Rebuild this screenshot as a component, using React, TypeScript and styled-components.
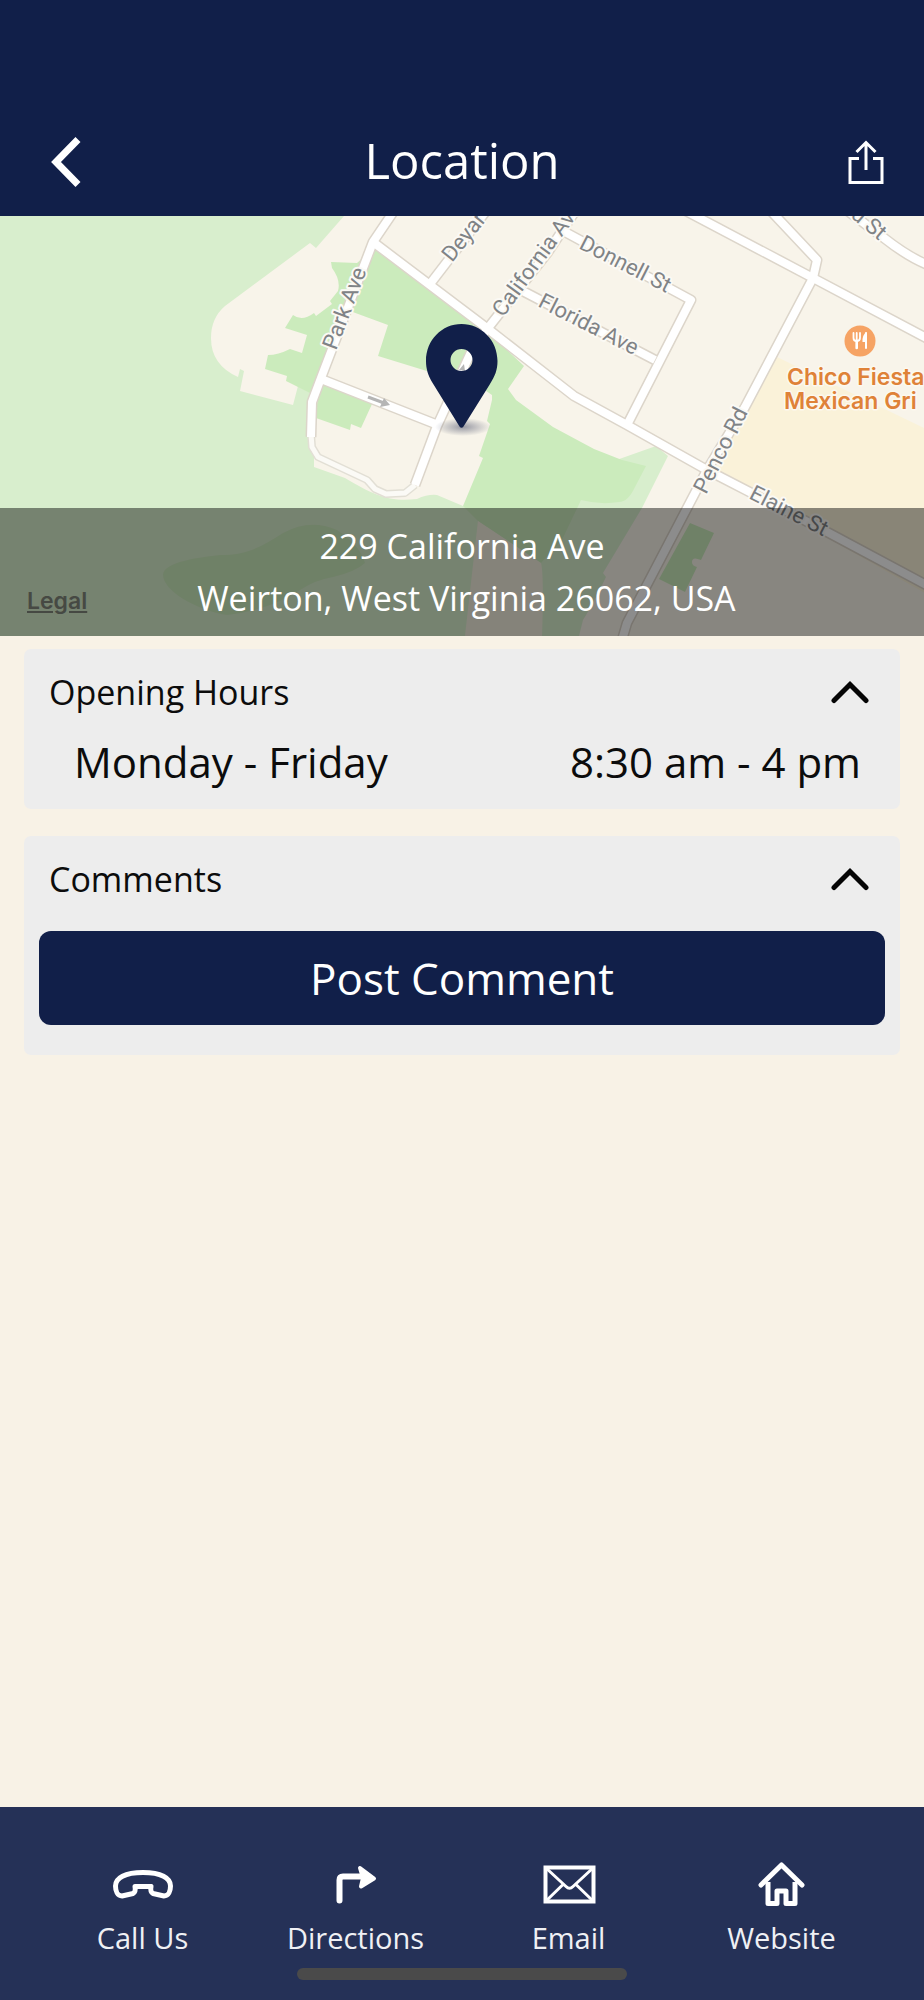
import React, { useState } from "react";
import styled, { createGlobalStyle } from "styled-components";

const GlobalStyle = createGlobalStyle`
  *, *::before, *::after { box-sizing: border-box; }
  body { margin: 0; background: #f8f2e6; }
  button { font: inherit; color: inherit; border: 0; padding: 0; background: none; cursor: pointer; }
`;

const navy = "#111f49";

const Screen = styled.div`
  min-height: 100vh;
  display: flex;
  flex-direction: column;
  background: #f8f2e6;
  color: #0c0c0c;
  font-family: "Open Sans", "Noto Sans", sans-serif;
`;

const Header = styled.header`
  display: grid;
  grid-template-columns: 1fr auto 1fr;
  align-items: center;
  padding: 124px 40px 16px;
  background: ${navy};
  color: #fff;
`;

const Title = styled.h1`
  margin: 2px 0 6px;
  font-size: 49px;
  line-height: 68px;
  font-weight: 400;
`;

const HeaderButton = styled.button<{ $side: "left" | "right" }>`
  justify-self: ${(p) => (p.$side === "left" ? "start" : "end")};
  display: flex;
  padding: 0 ${(p) => (p.$side === "left" ? "11px" : "0")};
`;

const MapSection = styled.section`
  position: relative;
  height: 420px;
  overflow: hidden;
`;

const MapDrawing = styled.svg`
  display: block;
  width: 100%;
  height: 100%;
`;

const StreetName = styled.text`
  font-family: Roboto, sans-serif;
  font-size: 22px;
  font-weight: 400;
  fill: #808386;
  stroke: #fbf9f4;
  stroke-width: 4px;
  stroke-linejoin: round;
  paint-order: stroke;
`;

const PlaceName = styled.text`
  font-family: Inter, sans-serif;
  font-size: 23px;
  font-weight: 600;
  fill: #df8238;
  stroke: #fcf8ee;
  stroke-width: 3px;
  stroke-linejoin: round;
  paint-order: stroke;
`;

const AddressBar = styled.address`
  position: absolute;
  left: 0;
  right: 0;
  bottom: 0;
  padding: 12px 24px;
  background: rgba(0, 0, 0, 0.45);
  color: #fff;
  font-size: 34px;
  line-height: 52px;
  font-style: normal;
  text-align: center;
`;

const AddressLine = styled.div``;

const LegalLink = styled.a`
  position: absolute;
  left: 27px;
  bottom: 21px;
  color: #464943;
  font-family: Inter, sans-serif;
  font-size: 23px;
  line-height: 28px;
  font-weight: 600;
  text-decoration: underline;
`;

const Main = styled.main`
  flex: 1;
  display: flex;
  flex-direction: column;
  gap: 27px;
  padding: 13px 24px;
`;

const Card = styled.section`
  padding: 20px 15px 18px;
  border-radius: 7px;
  background: #ededed;
`;

const CardTitle = styled.h2`
  margin: 0;
  font-size: 34px;
  line-height: 46px;
  font-weight: 400;
`;

const CardToggle = styled.button`
  display: flex;
  width: 100%;
  align-items: center;
  justify-content: space-between;
  padding: 0 16px 0 10px;
  text-align: left;
`;

const ToggleIcon = styled.svg<{ $open: boolean }>`
  transform: rotate(${(p) => (p.$open ? "0" : "180deg")});
`;

const HoursRow = styled.div`
  display: flex;
  justify-content: space-between;
  gap: 24px;
  padding: 18px 24px 0 35px;
  font-size: 42px;
  line-height: 58px;
`;

const PostButton = styled.button`
  display: block;
  width: 100%;
  height: 94px;
  margin: 29px 0 12px;
  border-radius: 12px;
  background: ${navy};
  color: #fff;
  font-size: 44px;
  line-height: 60px;
`;

const Footer = styled.footer`
  padding: 53px 36px 20px;
  background: #253157;
  color: #eff0f4;
`;

const Actions = styled.nav`
  display: grid;
  grid-template-columns: repeat(4, 1fr);
`;

const Action = styled.a`
  display: flex;
  flex-direction: column;
  align-items: center;
  gap: 10px;
  color: inherit;
  font-size: 29px;
  line-height: 40px;
  text-decoration: none;
`;

const HomeIndicator = styled.div`
  width: 330px;
  height: 12px;
  margin: 10px auto 0;
  border-radius: 6px;
  background: #4a4a4a;
`;

const roads = [
  "M396 208 L373 242 L321 378 L312 402 L311 437",
  "M415 485 L437 426 L472 350 L488 328",
  "M321 379 L438 425",
  "M373 242 L488 329 L574 396 L627 425 L707 470 L829 533 L934 589",
  "M430 284 L490 206",
  "M488 328 L548 252 L576 210",
  "M565 232 L691 300 L627 425",
  "M515 287 L655 360",
  "M686 211 L813 278 L934 342",
  "M769 209 L817 260 L813 278 L745 407 L707 470 L627 623 L622 640",
  "M845 209 L884 238 Q912 260 934 267",
];
const lane =
  "M311 434 L312 447 L318 457 L367 480 L375 489 L386 494 L405 493 L415 485";

function CityMap() {
  return (
    <MapDrawing
      viewBox="0 216 924 420"
      preserveAspectRatio="xMidYMid slice"
      role="img"
      aria-label="Map of 229 California Ave"
    >
      <defs>
        <radialGradient id="pinShadow">
          <stop offset="0" stopColor="#20284c" stopOpacity=".45" />
          <stop offset="1" stopColor="#20284c" stopOpacity="0" />
        </radialGradient>
      </defs>
      <rect x="-900" y="216" width="2724" height="420" fill="#f8f4ea" />
      {/* parkland */}
      <path
        fill="#d8eecd"
        d="M-900 216 H344 L316 248 L310 243 L225 306 Q211 318 211 338 Q211 365 238 377 L240 369 L244 371 L240 391 L293 405 L298 386 L312 393 L308 440 L314 455 V467 L345 478 C375 496 390 502 417 499 Q428 494 437 495 L463 506 L560 480 L656 446 L668 456 L642 508 L603 573 L606 577 Q592 606 583 620 L579 636 H-900 Z"
      />
      <path
        fill="#cbebbc"
        d="M374 248 L488 332 L524 366 L508 389 L516 400 L553 427 L594 449 L622 460 L646 466 L635 487 Q628 502 619 502 Q600 505 581 500 L562 540 L541 563 L479 522 L463 506 L483 458 L479 456 L490 424 L487 421 L492 400 V395 L470 380 L430 372 L378 356 L388 325 L350 311 L322 372 L312 394 L286 381 L287 376 L265 369 L268 355 Q278 355 290 349 L302 353 L307 335 L285 328 L293 315 Q302 322 314 313 L316 316 L332 304 L330 301 L338 291 Q341 280 332 268 L331 262 L357 263 Z"
      />
      <path
        fill="#cbebbc"
        d="M319 379 L372 404 L361 428 L351 424 L350 430 L316 418 Z"
      />
      <path
        fill="#cbebbc"
        d="M163 575 C163 562 200 557 220 555 C245 555 260 548 283 533 Q310 518 337 530 Q360 545 365 563 Q355 572 333 577 Q315 580 300 590 C280 603 255 612 227 615 C195 610 163 590 163 575 Z"
      />
      <path fill="#f3efdf" d="M478 521 L541 563 Q544 575 542 636 H465 Z" />
      <path
        fill="#cbebbc"
        d="M690 523 L714 533 L701 560 Q692 556 692 562 Q692 566 697 567 L685 592 L659 579 Z"
      />
      <path fill="#faf2d9" d="M777 357 L924 428 L1824 860 V1100 L707 470 Z" />
      {/* streets */}
      <g fill="none" strokeLinejoin="round">
        <path d={lane} stroke="#e2dfd5" strokeWidth="8" />
        {roads.map((d) => (
          <path key={d} d={d} stroke="#dcd5ca" strokeWidth="11" />
        ))}
        <path d={lane} stroke="#fbfaf6" strokeWidth="5" />
        {roads.map((d) => (
          <path key={d} d={d} stroke="#fff" strokeWidth="8" />
        ))}
      </g>
      <path
        d="M368 397 L384 403"
        stroke="#b5b5b5"
        strokeWidth="3"
        fill="none"
      />
      <path d="M384 398 L390 405 L380 407 Z" fill="#b5b5b5" />
      <StreetName transform="translate(336 351) rotate(-69)">Park Ave</StreetName>
      <StreetName transform="translate(452 263) rotate(-51)">Deyar</StreetName>
      <StreetName transform="translate(503 318) rotate(-54)">California Ave</StreetName>
      <StreetName transform="translate(578 248) rotate(27)">Donnell St</StreetName>
      <StreetName transform="translate(537 306) rotate(27)">Florida Ave</StreetName>
      <StreetName transform="translate(706 495) rotate(-63)">Penco Rd</StreetName>
      <StreetName transform="translate(748 498) rotate(27)">Elaine St</StreetName>
      <StreetName transform="translate(879 241) rotate(40)" textAnchor="end">
        d St
      </StreetName>
      {/* restaurant */}
      <circle cx="860" cy="341" r="15.5" fill="#f6a364" />
      <g fill="none" stroke="#fff" strokeLinecap="round">
        <path d="M853.5 333 V338 Q853.5 341 856.5 341 Q860 341 860 338 V333 M856.7 333 V340" strokeWidth="1.8" />
        <path d="M856.7 341 V348" strokeWidth="2.6" />
        <path d="M866 333 V348" strokeWidth="2" />
      </g>
      <path d="M866.5 332 Q862 335 862.5 342 H866.5 Z" fill="#fff" />
      <PlaceName x="787" y="385">Chico Fiesta</PlaceName>
      <PlaceName x="784" y="409">Mexican Gri</PlaceName>
      {/* pin */}
      <path d="M459 370 L464 364 L465 371 Z" fill="#b5b5b5" />
      <ellipse cx="463" cy="427" rx="28" ry="9" fill="url(#pinShadow)" />
      <path
        fill={navy}
        fillRule="evenodd"
        d="M461.500 324 C481 324 497.500 340 497.500 361 C497.500 370 495 376 490 384 L463.500 426.500 Q461.500 429 459.500 426.500 L432 382 C428 375 426 369 426 361 C426 340 442 324 461.500 324 Z M461.500 349 A11 11 0 1 0 461.500 371 A11 11 0 1 0 461.500 349 Z"
      />
    </MapDrawing>
  );
}

function BackIcon() {
  return (
    <svg width="30" height="50" viewBox="0 0 30 50" fill="none" stroke="#fff" strokeWidth="7" aria-hidden="true">
      <path d="M27 2.500 L5 25 L27 47.500" />
    </svg>
  );
}

function ShareIcon() {
  return (
    <svg width="36" height="46" viewBox="0 0 36 46" fill="none" stroke="#fff" strokeWidth="3" aria-hidden="true">
      <path d="M11 19.500 H2 V43.500 H34 V19.500 H25 M18 31 V4 M8.500 13 L18 3.500 L27.500 13" />
    </svg>
  );
}

const actionIcons = {
  call: (
    <path
      d="M11 36 C6.500 36 4.500 31 4.500 26 C4.500 18 14 12.500 32 12.500 S59.500 18 59.500 26 C59.500 31 57.500 36 53 36 L42 33.500 Q39 32 40 26.500 H24 Q25 32 22 33.500 Z"
      fill="none"
      strokeWidth="5"
    />
  ),
  directions: (
    <>
      <path d="M15.500 40.500 V20 Q15.500 16.500 19 16.500 H38" fill="none" strokeWidth="6" strokeLinecap="round" />
      <path d="M36 8 L50 18.500 L37 26.500 L39 18 Z" fill="#fff" strokeWidth="4" />
    </>
  ),
  email: (
    <>
      <rect x="8.500" y="7.500" width="48" height="34" fill="none" strokeWidth="4" strokeLinejoin="miter" />
      <path d="M9 8 L29 26.500 Q32.500 30 36 26.500 L56 8 M9 41 L25.500 25 M56 41 L39.500 25" fill="none" strokeWidth="3" />
    </>
  ),
  website: (
    <>
      <path d="M11 25 L31.500 5 L52 25" fill="none" strokeWidth="5" strokeLinecap="round" />
      <path d="M18 22 V43.500 H27 V31 H36 V43.500 H45 V22" fill="none" strokeWidth="5" />
    </>
  ),
};

function ActionLink({ icon, label, href }: { icon: keyof typeof actionIcons; label: string; href: string }) {
  return (
    <Action href={href}>
      <svg width="64" height="48" viewBox="0 0 64 48" stroke="#fff" strokeLinejoin="round" aria-hidden="true">
        {actionIcons[icon]}
      </svg>
      {label}
    </Action>
  );
}

function Panel({ title, children }: { title: string; children: React.ReactNode }) {
  const [open, setOpen] = useState(true);
  return (
    <Card>
      <CardTitle>
        <CardToggle aria-expanded={open} onClick={() => setOpen(!open)}>
          {title}
          <ToggleIcon $open={open} width="38" height="24" viewBox="0 0 38 24" fill="none" stroke="#050505" strokeWidth="5" aria-hidden="true">
            <path d="M3 20.500 L19 4.500 L35 20.500" strokeLinecap="round" />
          </ToggleIcon>
        </CardToggle>
      </CardTitle>
      {open && children}
    </Card>
  );
}

export default function App() {
  return (
    <Screen>
      <GlobalStyle />
      <Header>
        <HeaderButton $side="left" aria-label="Back">
          <BackIcon />
        </HeaderButton>
        <Title>Location</Title>
        <HeaderButton $side="right" aria-label="Share">
          <ShareIcon />
        </HeaderButton>
      </Header>
      <MapSection>
        <CityMap />
        <AddressBar>
          <AddressLine>229 California Ave</AddressLine>
          <AddressLine>&nbsp;Weirton, West Virginia 26062, USA</AddressLine>
          <LegalLink href="#legal">Legal</LegalLink>
        </AddressBar>
      </MapSection>
      <Main>
        <Panel title="Opening Hours">
          <HoursRow>
            <span>Monday - Friday</span>
            <span>8:30 am - 4 pm</span>
          </HoursRow>
        </Panel>
        <Panel title="Comments">
          <PostButton>Post Comment</PostButton>
        </Panel>
      </Main>
      <Footer>
        <Actions>
          <ActionLink icon="call" label="Call Us" href="#call" />
          <ActionLink icon="directions" label="Directions" href="#directions" />
          <ActionLink icon="email" label="Email" href="#email" />
          <ActionLink icon="website" label="Website" href="#website" />
        </Actions>
        <HomeIndicator />
      </Footer>
    </Screen>
  );
}
